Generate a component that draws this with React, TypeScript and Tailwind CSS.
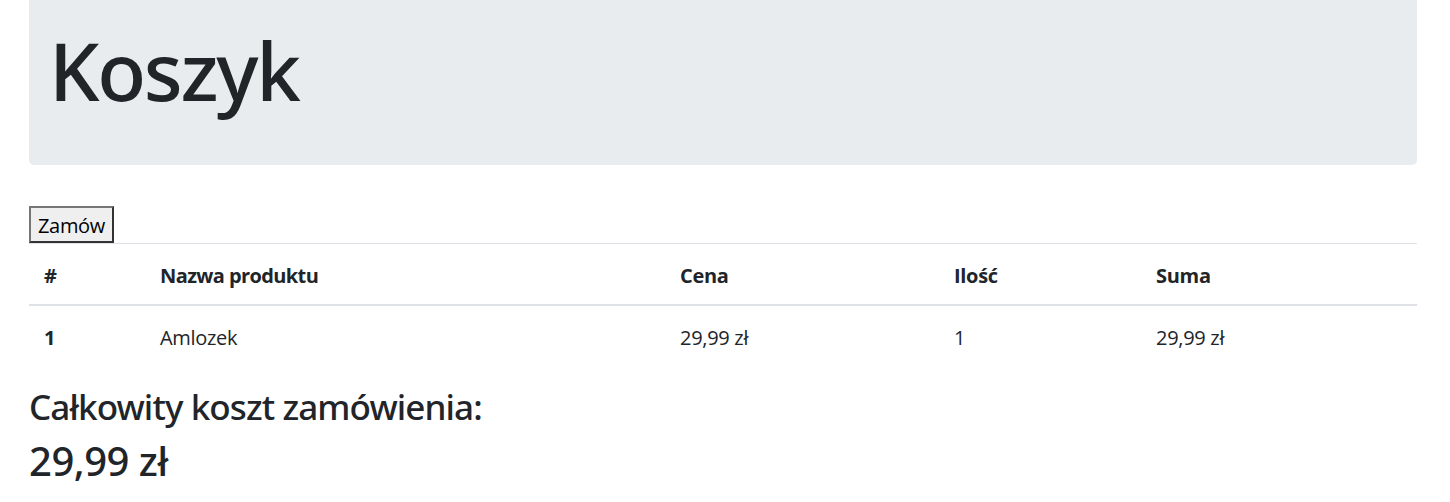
import React from "react";

export default function App() {
  const font = { fontFamily: '"Open Sans", "Noto Sans", "Liberation Sans", sans-serif' };
  const head = { fontFamily: '"Noto Sans", "Open Sans", sans-serif' };
  return (
    <div className="pl-[29px] pr-[33px] text-[#212529] bg-white min-h-[502px]" style={font}>
      <div className="bg-[#e9ecef] rounded-b-[5px] h-[165px] px-[20px] pt-[22px]">
        <h1 className="text-[80px] leading-[1.2] font-medium tracking-[-2.3px]" style={head}>Koszyk</h1>
      </div>
      <button className="mt-[41px] block h-[37px] w-[85px] pt-[2px] bg-[#efefef] border-2 border-t-[#767676] border-l-[#767676] border-b-[#333] border-r-[#333] text-[20px] leading-[30px] text-black tracking-[-0.3px]">
        Zamów
      </button>
      <table className="w-full table-fixed border-collapse text-[20px] leading-[30px] mb-[20px] tracking-[-0.3px]">
        <thead>
          <tr className="border-t border-[#dee2e6]">
            <th className="w-[116px] text-left font-bold pt-[17px] pb-[13px] px-[15px] border-b-2 border-[#dee2e6]">#</th>
            <th className="w-[520px] text-left font-bold pt-[17px] pb-[13px] px-[15px] border-b-2 border-[#dee2e6] tracking-[-0.6px]">Nazwa produktu</th>
            <th className="w-[274px] text-left font-bold pt-[17px] pb-[13px] px-[15px] border-b-2 border-[#dee2e6]">Cena</th>
            <th className="w-[202px] text-left font-bold pt-[17px] pb-[13px] px-[15px] border-b-2 border-[#dee2e6]">Ilość</th>
            <th className="text-left font-bold pt-[17px] pb-[13px] px-[15px] border-b-2 border-[#dee2e6]">Suma</th>
          </tr>
        </thead>
        <tbody>
          <tr>
            <th className="text-left font-bold pt-[17px] pb-[13px] px-[15px]">1</th>
            <td className="pt-[17px] pb-[13px] px-[15px]">Amlozek</td>
            <td className="pt-[17px] pb-[13px] px-[15px]">29,99 zł</td>
            <td className="pt-[17px] pb-[13px] px-[15px]">1</td>
            <td className="pt-[17px] pb-[13px] px-[15px]">29,99 zł</td>
          </tr>
        </tbody>
      </table>
      <h3 className="mt-[5px] text-[35px] leading-[42px] font-medium mb-[9px] tracking-[-0.9px]" style={head}>Całkowity koszt zamówienia:</h3>
      <h2 className="text-[40px] leading-[48px] font-medium tracking-[-0.5px]" style={head}>29,99 zł</h2>
    </div>
  );
}
